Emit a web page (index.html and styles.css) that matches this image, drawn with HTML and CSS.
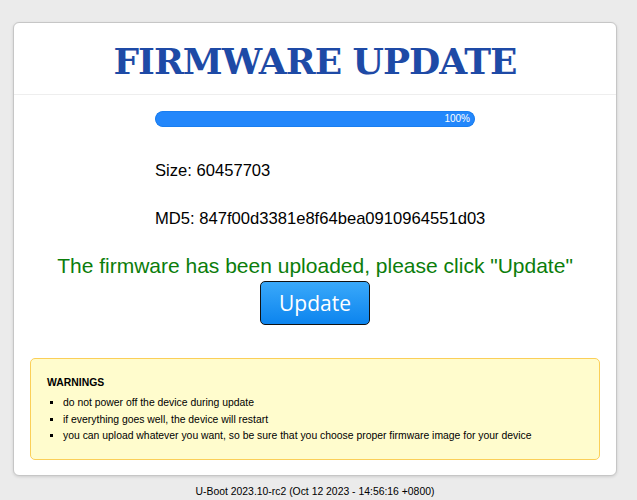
FILE: index.html
```html
<!DOCTYPE html>
<html lang="en">
<head>
    <meta charset="UTF-8">
    <meta name="viewport" content="width=device-width, initial-scale=1.0">
    <title>Firmware update</title>
    <link rel="stylesheet" href="styles.css">
</head>
<body>
    <div class="card">
        <div class="header">
            <h1>FIRMWARE UPDATE</h1>
        </div>
        <div class="content">
            <div class="bar">
                <div class="bar-fill" style="width: 100%;">100%</div>
            </div>
            <p class="info">Size: 60457703</p>
            <p class="info">MD5: 847f00d3381e8f64bea0910964551d03</p>
            <p class="done">The firmware has been uploaded, please click "Update"</p>
            <button type="button" class="update-button">Update</button>
            <div class="warnings">
                <strong>WARNINGS</strong>
                <ul>
                    <li>do not power off the device during update</li>
                    <li>if everything goes well, the device will restart</li>
                    <li>you can upload whatever you want, so be sure that you choose proper firmware image for your device</li>
                </ul>
            </div>
        </div>
    </div>
    <div class="footer">U-Boot 2023.10-rc2 (Oct 12 2023 - 14:56:16 +0800)</div>
</body>
</html>
```

FILE: styles.css
```css
body {
    margin: 0;
    padding: 22px 20px 0 13px;
    background-color: #ebebeb;
    font-family: "Liberation Sans", Arial, sans-serif;
    color: #000;
}
.card {
    background-color: #fff;
    border: 1px solid #c6c6c6;
    border-radius: 6px;
    box-shadow: 0 1px 3px rgba(0, 0, 0, 0.12);
}
.header {
    height: 72px;
    box-sizing: border-box;
    padding-top: 5px;
    border-bottom: 1px solid #eeeeee;
    display: flex;
    align-items: center;
    justify-content: center;
}
h1 {
    margin: 0;
    font-family: "DejaVu Serif", serif;
    font-weight: bold;
    font-size: 36px;
    color: #1e4aa6;
    letter-spacing: -1px;
}
.content {
    display: flex;
    flex-direction: column;
    align-items: center;
    padding: 16px 16px 15px;
}
.bar {
    width: 320px;
    height: 16px;
    border-radius: 8px;
    background-color: #e6e6e6;
    overflow: hidden;
}
.bar-fill {
    height: 100%;
    background-color: #2387fb;
    border-radius: 8px;
    box-shadow: inset 0 0 0 1px #1a7ef0;
    color: #fff;
    font-size: 10px;
    line-height: 16px;
    text-align: right;
    padding-right: 5px;
    box-sizing: border-box;
}
.info {
    width: 320px;
    margin: 34px 0 0;
    font-size: 16.6px;
    line-height: 19px;
    white-space: nowrap;
}
.info + .info {
    margin-top: 29px;
}
.done {
    margin: 26px 0 0;
    font-size: 21px;
    line-height: 24px;
    color: #0b7d0b;
}
.update-button {
    margin-top: 3px;
    width: 110px;
    height: 44px;
    font-family: "Open Sans", sans-serif;
    font-size: 21px;
    color: #fff;
    background: linear-gradient(#3aa9fa, #0c84ee);
    border: 1px solid #111;
    border-radius: 5px;
    cursor: pointer;
}
.warnings {
    align-self: stretch;
    margin: 33px 0 0;
    padding: 17px 16px 14px;
    background-color: #fffccd;
    border: 1px solid #fbcf58;
    border-radius: 5px;
    font-size: 10.4px;
}
.warnings strong {
    display: block;
    line-height: 13px;
    margin-bottom: 6px;
}
.warnings ul {
    margin: 0;
    padding-left: 16px;
    list-style: square;
}
.warnings li {
    line-height: 16.5px;
}
.footer {
    padding: 9px 0;
    text-align: center;
    font-size: 10.4px;
    line-height: 13px;
}
```
